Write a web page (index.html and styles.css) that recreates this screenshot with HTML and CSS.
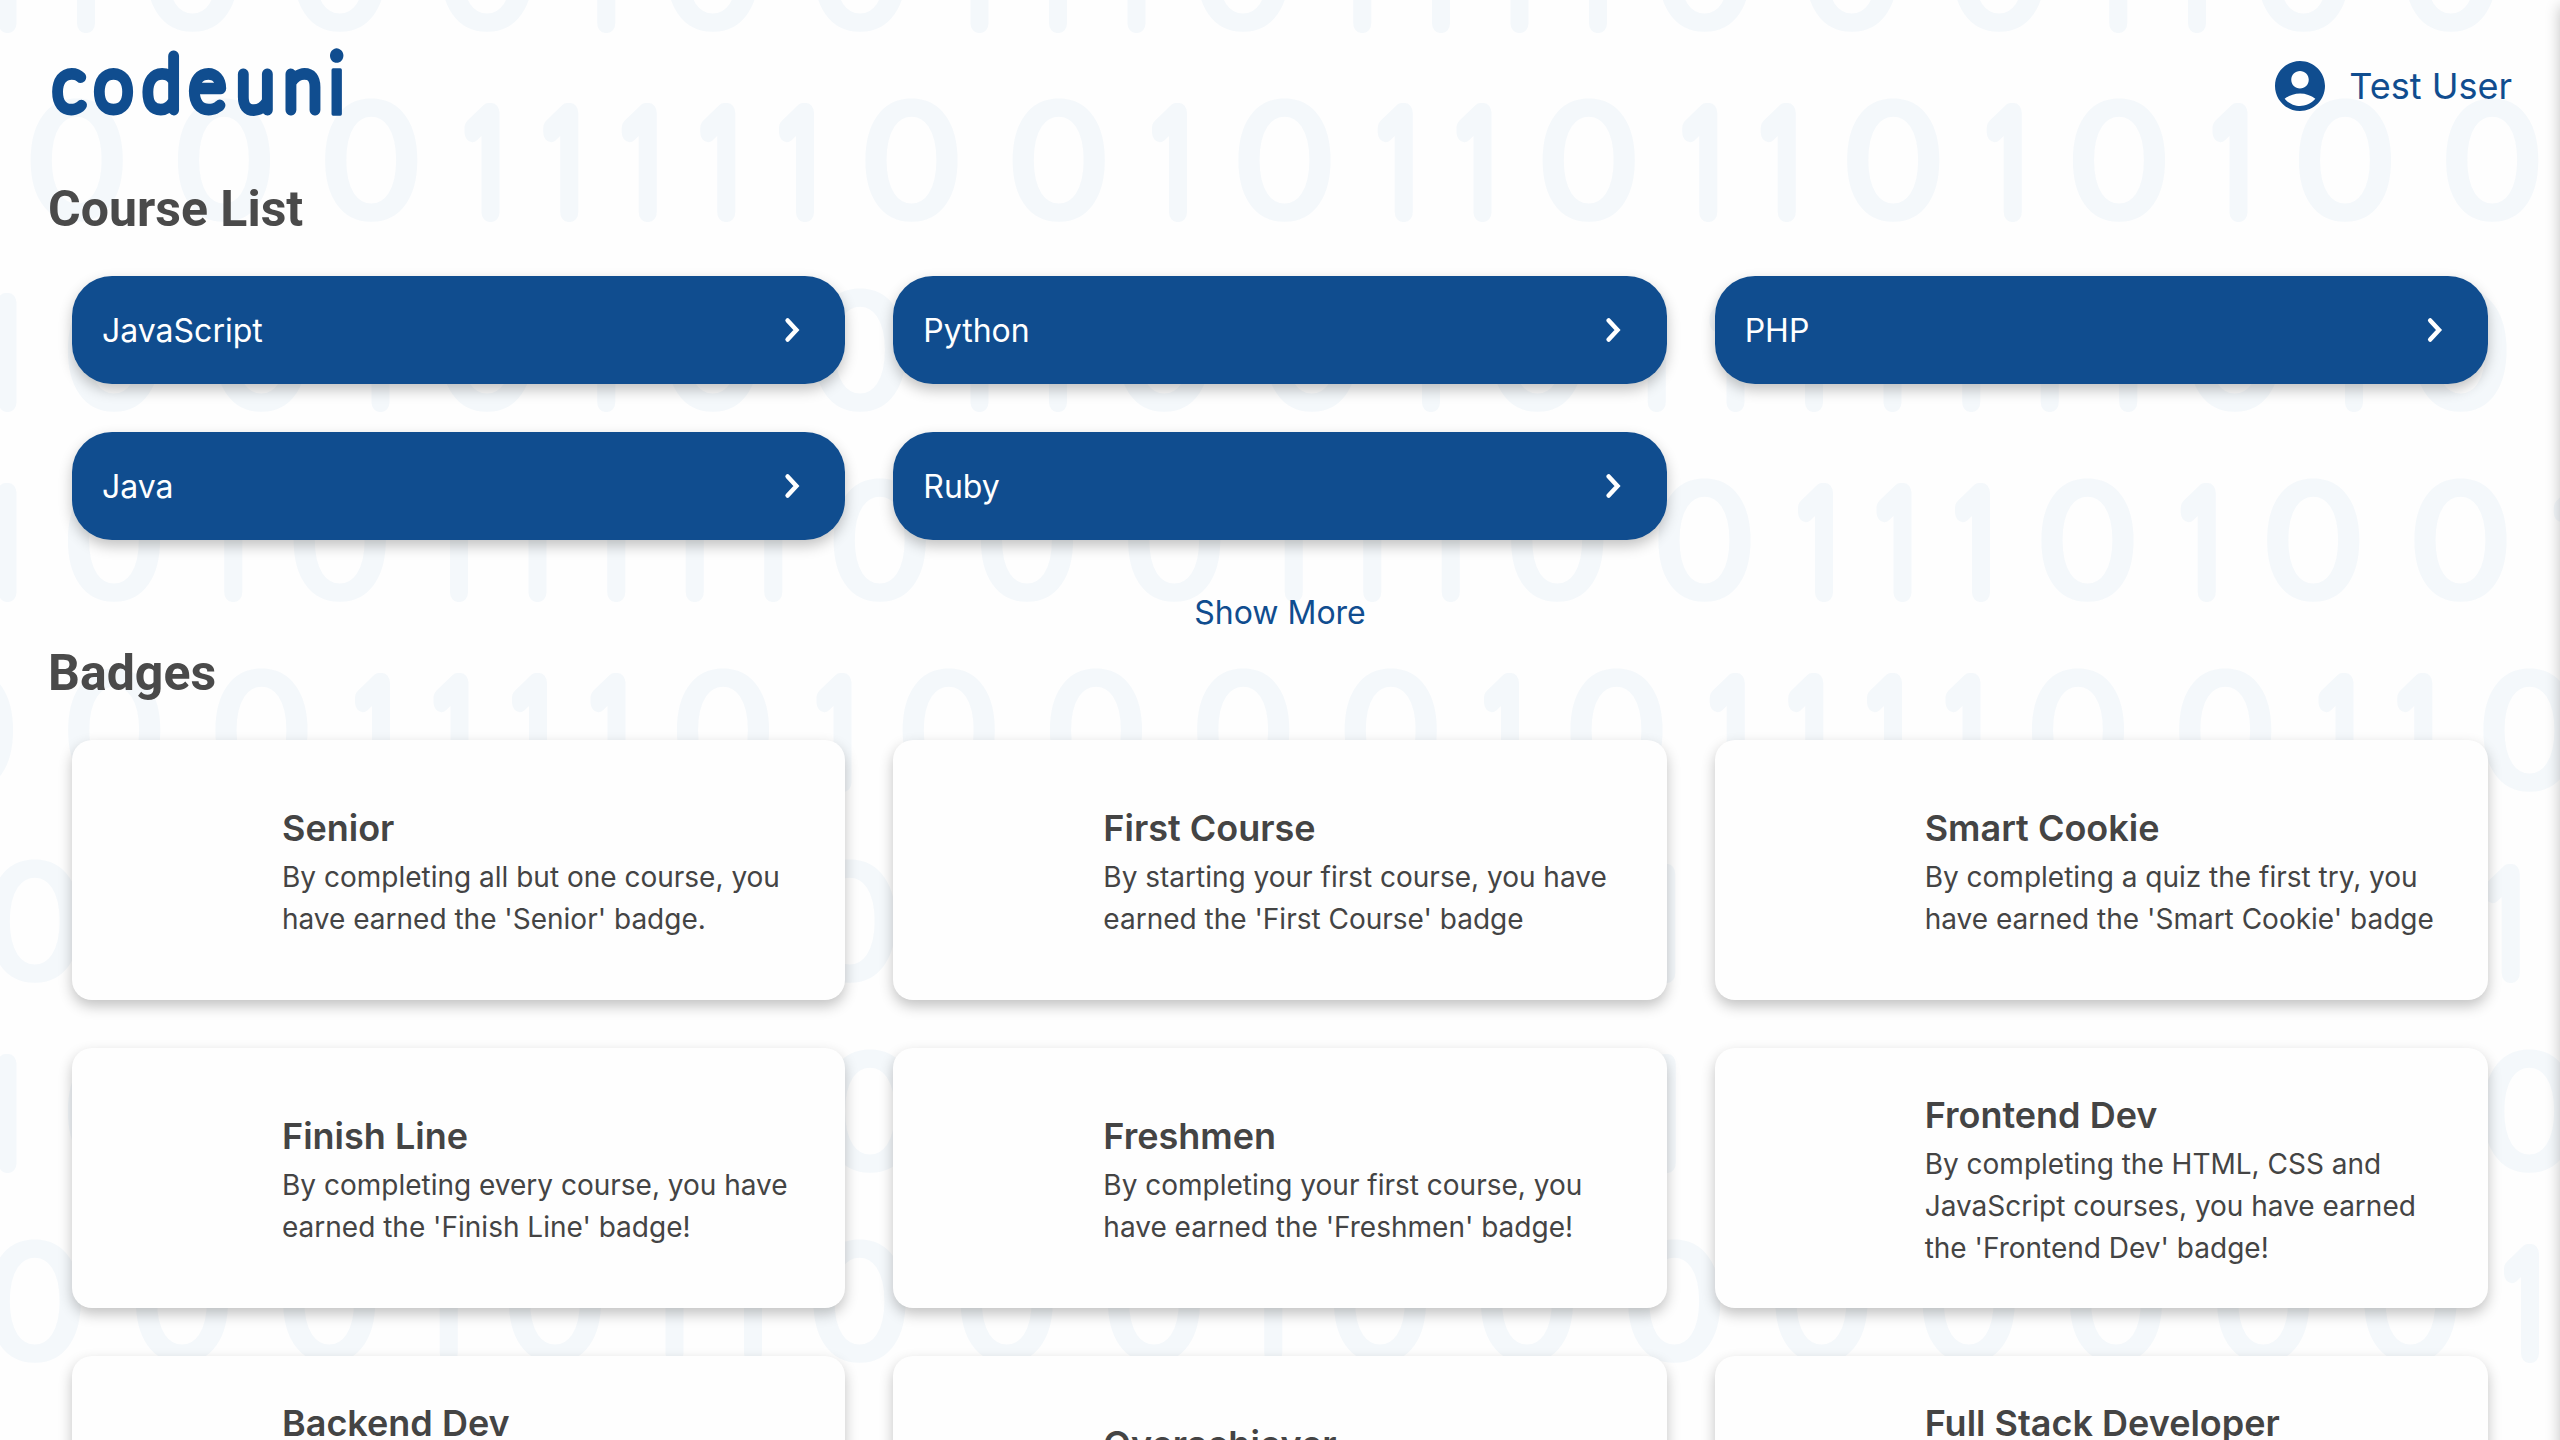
FILE: index.html
```html
<!DOCTYPE html>
<html lang="en">
<head>
<meta charset="utf-8">
<title>codeuni</title>
<link rel="stylesheet" href="styles.css">
</head>
<body>
<div class="page">
  <svg class="backdrop" id="backdrop" viewBox="0 0 2560 1440" aria-hidden="true"></svg>

  <header class="header">
    <svg class="logo" viewBox="48 42 300 88" role="img" aria-label="codeuni">
      <text class="logo-text" transform="scale(.93 1)" x="57.1 101.9 153.9 204.1 254.8 305.6" y="110.5">codeun<tspan class="logo-i" x="351.5" y="114.300">i</tspan></text>
    </svg>
    <div class="user">
      <svg class="user-icon" viewBox="0 0 24 24"><path fill="currentColor" d="M12 2C6.48 2 2 6.48 2 12s4.48 10 10 10 10-4.48 10-10S17.52 2 12 2zm0 4c1.93 0 3.5 1.57 3.5 3.5S13.93 13 12 13s-3.500-1.570-3.500-3.500S10.070 6 12 6zm0 14c-2.030 0-4.430-.82-6.140-2.880C7.550 15.800 9.680 15 12 15s4.450.8 6.140 2.120C16.430 19.180 14.030 20 12 20z"/></svg>
      <span>Test User</span>
    </div>
  </header>

  <main>
    <h1 class="heading">Course List</h1>
    <div class="grid">
      <a class="course"><span>JavaScript</span><svg class="chevron" viewBox="0 0 16 26"><path d="M3.600 3.500 12.400 13l-8.800 9.500"/></svg></a>
      <a class="course"><span>Python</span><svg class="chevron" viewBox="0 0 16 26"><path d="M2.700 3.500 11.500 13l-8.800 9.500"/></svg></a>
      <a class="course"><span>PHP</span><svg class="chevron" viewBox="0 0 16 26"><path d="M3.200 3.500 12 13l-8.800 9.500"/></svg></a>
      <a class="course"><span>Java</span><svg class="chevron" viewBox="0 0 16 26"><path d="M3.600 3.500 12.400 13l-8.800 9.500"/></svg></a>
      <a class="course"><span>Ruby</span><svg class="chevron" viewBox="0 0 16 26"><path d="M2.700 3.500 11.500 13l-8.800 9.500"/></svg></a>
    </div>
    <a class="show-more">Show More</a>

    <h1 class="heading">Badges</h1>
    <div class="grid">
      <article class="badge"><h2>Senior</h2><p>By completing all but one course, you have earned the 'Senior' badge.</p></article>
      <article class="badge"><h2>First Course</h2><p>By starting your first course, you have earned the 'First Course' badge</p></article>
      <article class="badge"><h2>Smart Cookie</h2><p>By completing a quiz the first try, you have earned the 'Smart Cookie' badge</p></article>
      <article class="badge"><h2>Finish Line</h2><p>By completing every course, you have earned the 'Finish Line' badge!</p></article>
      <article class="badge"><h2>Freshmen</h2><p>By completing your first course, you have earned the 'Freshmen' badge!</p></article>
      <article class="badge"><h2>Frontend Dev</h2><p>By completing the HTML, CSS and JavaScript courses, you have earned the 'Frontend Dev' badge!</p></article>
      <article class="badge badge-tall"><h2>Backend Dev</h2></article>
      <article class="badge badge-medium"><h2>Overachiever</h2></article>
      <article class="badge badge-tall"><h2>Full Stack Developer</h2></article>
    </div>
  </main>
  <aside class="drawer"></aside>
</div>
<script src="backdrop.js"></script>
</body>
</html>
```
FILE: backdrop.js
```js
// Rows of binary digits behind the page: left start, bottom edge, digits.
const rows = [
  [-19.5, 32, '11000100111011110001100'],
  [22, 222, '00011111001011011010100'],
  [-19.5, 412, '100101001100101111111010'],
  [-19.5, 602, '1010111110001110011101001'],
  [-87.8, 792, '000111101000010111100110'],
  [-20, 983, '0010000110111111011011111'],
  [-19.5, 1173, '101011010100101101011010'],
  [-20, 1363, '00010110001000000001'],
  [-88, 1553, '01010110']
];
const NS = 'http://www.w3.org/2000/svg';
const svg = document.getElementById('backdrop');
const ZERO_SCALE = 1.155;
const ONE_SCALE = 0.78;

function addText(cls, scale, xs, y, char) {
  if (!xs.length) return;
  const t = document.createElementNS(NS, 'text');
  t.setAttribute('class', cls);
  t.setAttribute('transform', `scale(${scale} 1)`);
  t.setAttribute('x', xs.map(x => x.toFixed(1)).join(' '));
  t.setAttribute('y', y);
  t.textContent = char.repeat(xs.length);
  svg.appendChild(t);
}

for (const [start, bottom, digits] of rows) {
  let x = start;
  const zeros = [];
  const ones = [];
  for (const d of digits) {
    if (d === '0') {
      zeros.push((x + 54.8) / ZERO_SCALE);
      x += 147.25;
    } else {
      ones.push((x + 37.2) / ONE_SCALE - 46.2);
      x += 78.57;
    }
  }
  addText('zero', ZERO_SCALE, zeros, bottom - 9.3, '0');
  addText('one', ONE_SCALE, ones, bottom - 9.500, '1');
}
```
FILE: styles.css
```css
* { box-sizing: border-box; }

body {
  margin: 0;
  background: #fefefe;
  color: #444;
  font-family: Inter, "Liberation Sans", sans-serif;
}

.page {
  position: relative;
  height: 1440px;
  overflow: hidden;
}

.backdrop {
  position: absolute;
  inset: 0;
  width: 2560px;
  height: 1440px;
}

.zero, .one {
  font-family: Inter, sans-serif;
  font-weight: 100;
  fill: #f4f8fb;
  stroke: #f4f8fb;
  stroke-linejoin: round;
}

.zero { font-size: 145px; stroke-width: 15px; text-anchor: middle; }
.one { font-size: 136px; stroke-width: 20px; }

.header {
  position: relative;
  display: flex;
  justify-content: space-between;
  align-items: center;
  height: 172px;
  padding: 0 48px;
}

.logo {
  width: 300px;
  height: 88px;
}

.logo-text {
  font-family: Lato, sans-serif;
  font-weight: 100;
  font-size: 73.300px;
  fill: #104d8f;
  stroke: #104d8f;
  stroke-width: 10.800px;
  stroke-linejoin: round;
}

.logo-i {
  font-weight: 400;
  font-size: 87px;
  stroke-width: 3.400px;
}

.user {
  display: flex;
  align-items: center;
  gap: 19px;
  color: #104d8f;
  font-size: 36px;
}

.user-icon {
  width: 60px;
  height: 60px;
}

main { position: relative; }

.heading {
  height: 72px;
  margin: 0;
  padding: 1px 48px 0;
  font: 700 50px/72px Roboto, sans-serif;
  color: #4a4a4a;
}

.grid {
  display: grid;
  grid-template-columns: repeat(3, 1fr);
  gap: 48px;
  padding: 32px 72px 0;
}

.course {
  display: flex;
  justify-content: space-between;
  align-items: center;
  height: 108px;
  padding: 0 45px 0 30px;
  border-radius: 40px;
  background: #104d8f;
  color: #fff;
  font-size: 32px;
  box-shadow: 0 6px 14px rgba(0, 0, 0, .24);
}

.chevron {
  width: 16px;
  height: 26px;
  fill: none;
  stroke: #fff;
  stroke-width: 4.500;
  stroke-linecap: round;
}

.show-more {
  display: block;
  height: 48px;
  margin: 48px 0 0;
  padding-top: 1px;
  color: #104d8f;
  font-size: 32px;
  line-height: 48px;
  text-align: center;
}

.badge {
  display: flex;
  flex-direction: column;
  justify-content: center;
  height: 260px;
  padding: 0 30px 0 210px;
  border-radius: 20px;
  background: #fefefe;
  box-shadow: 0 6px 14px rgba(0, 0, 0, .24);
}

.badge h2 {
  margin: 0;
  font-size: 36px;
  font-weight: 600;
  line-height: 54px;
}

.badge p {
  margin: 1px 0 -1px;
  font-size: 28px;
  line-height: 42px;
}

.badge-tall, .badge-medium { justify-content: flex-start; }
.badge-tall { padding-top: 40px; }
.badge-medium { padding-top: 61px; }

.drawer {
  position: absolute;
  top: 0;
  left: 100%;
  width: 400px;
  height: 1500px;
  background: #fefefe;
  box-shadow: 0 6px 14px rgba(0, 0, 0, .24);
}
```
